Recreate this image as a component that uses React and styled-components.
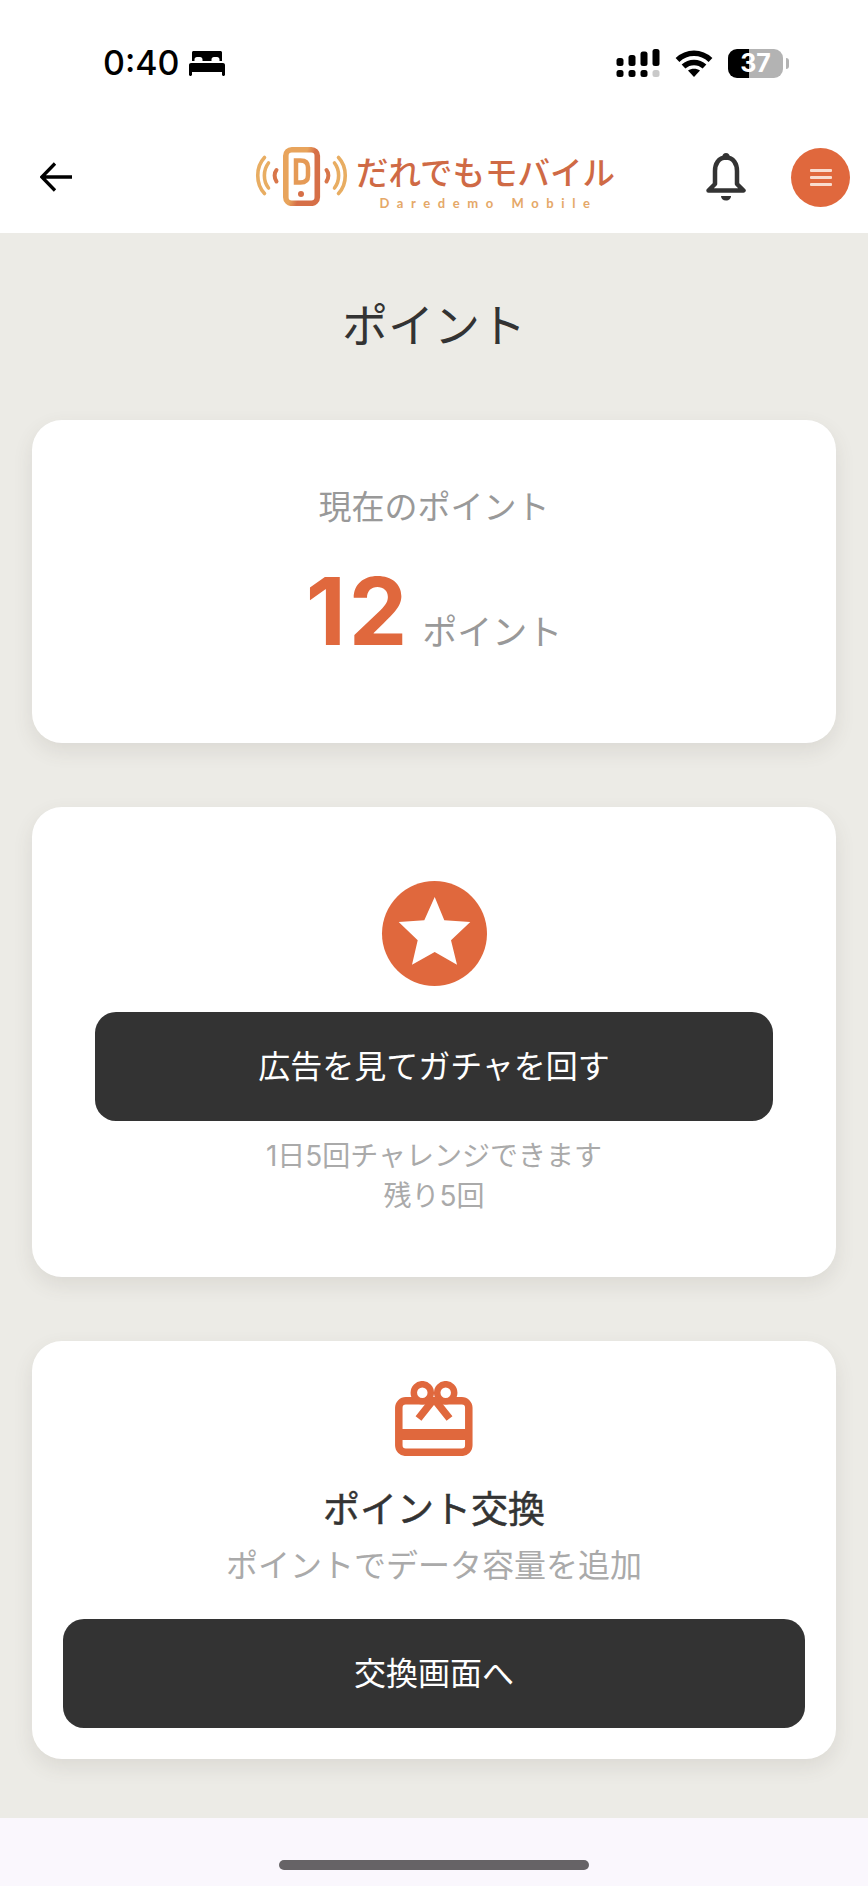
import React from "react";
import styled, { createGlobalStyle } from "styled-components";

const Global = createGlobalStyle`
  html, body { margin: 0; padding: 0; background: #ecebe6; }
  * { box-sizing: border-box; }
  body { font-family: "Inter", "Noto Sans CJK JP", sans-serif; }
`;

const Page = styled.div`
  width: 868px;
  height: 1886px;
  display: flex;
  flex-direction: column;
  overflow: hidden;
  background: #ecebe6;
`;
const Top = styled.header`
  background: #fff;
  height: 233px;
  display: flex;
  flex-direction: column;
`;
const StatusBar = styled.div`
  height: 120px;
  padding: 44px 78px 0 103px;
  display: flex;
  align-items: flex-start;
  justify-content: space-between;
`;
const TimeGroup = styled.div`
  display: flex;
  align-items: center;
  gap: 9px;
  height: 38px;
`;
const Time = styled.span`
  font-size: 34px;
  font-weight: 550;
  color: #000;
  line-height: 38px;
`;
const StatusIcons = styled.div`
  display: flex;
  align-items: center;
  gap: 15px;
  height: 38px;
`;
const Battery = styled.div`
  position: relative;
  width: 55px;
  height: 29px;
  border-radius: 9px;
  background: linear-gradient(90deg, #000 0 38%, #b3b3b3 38% 100%);
  color: #fff;
  font-size: 25px;
  font-weight: 700;
  line-height: 29px;
  text-align: center;
  margin-right: 7px;
  &::after {
    content: "";
    position: absolute;
    right: -6px;
    top: 9px;
    width: 3px;
    height: 11px;
    border-radius: 0 3px 3px 0;
    background: #b3b3b3;
  }
`;
const Nav = styled.nav`
  height: 113px;
  display: flex;
  align-items: center;
  padding: 0 18px 0 40px;
`;
const Logo = styled.div`
  margin-left: 183px;
  width: 358px;
  display: flex;
  align-items: center;
  gap: 10px;
`;
const LogoWords = styled.div`
  display: flex;
  flex-direction: column;
  align-items: center;
  width: 255px;
  padding-top: 6px;
`;
const LogoMain = styled.span`
  display: block;
  font-family: "Noto Sans CJK JP", sans-serif;
  font-size: 32.5px;
  font-weight: 500;
  line-height: 40px;
  height: 40px;
  color: #cf6a45;
  white-space: nowrap;
`;
const LogoSub = styled.span`
  display: block;
  margin: 6px 0 0 6px;
  font-family: "Lato", sans-serif;
  font-size: 13px;
  font-weight: 700;
  line-height: 12px;
  letter-spacing: 7.6px;
  color: #e5a868;
  white-space: nowrap;
`;
const Bell = styled.svg`
  width: 40px;
  height: 50px;
  margin-left: 93px;
  margin-top: 3px;
`;
const MenuButton = styled.div`
  width: 59px;
  height: 59px;
  margin-left: 45px;
  margin-top: 1px;
  border-radius: 50%;
  background: #e0683d;
  display: flex;
  flex-direction: column;
  align-items: center;
  justify-content: center;
  gap: 4px;
`;
const MenuBar = styled.span`
  width: 22px;
  height: 3px;
  background: #f9dccf;
  border-radius: 1px;
`;
const Main = styled.main`
  flex: 1;
  display: flex;
  flex-direction: column;
  padding: 0 32px;
`;
const Title = styled.h1`
  height: 187px;
  margin: 0;
  padding-bottom: 10px;
  display: flex;
  align-items: center;
  justify-content: center;
  font-size: 46px;
  font-weight: 400;
  color: #333;
`;
const Cards = styled.div`
  display: flex;
  flex-direction: column;
  gap: 64px;
`;
const Card = styled.section`
  background: #fff;
  border-radius: 30px;
  box-shadow: 0 8px 20px rgba(80, 70, 60, 0.11);
  padding: ${(p) => p.$pad};
  display: flex;
  flex-direction: column;
  align-items: center;
`;
const Label = styled.div`
  font-size: 33px;
  line-height: 48px;
  color: #999;
`;
const ValueRow = styled.div`
  display: flex;
  align-items: baseline;
  gap: 12px;
  margin-top: 24px;
`;
const Value = styled.span`
  font-size: 93px;
  font-weight: 700;
  line-height: 112px;
  letter-spacing: 3px;
  color: #e0683d;
`;
const Unit = styled.span`
  font-size: 35px;
  color: #999;
`;
const Circle = styled.div`
  width: 105px;
  height: 105px;
  border-radius: 50%;
  background: #e0683d;
  display: flex;
  align-items: center;
  justify-content: center;
`;
const DarkButton = styled.button`
  width: 100%;
  height: 109px;
  border: 0;
  border-radius: 21px;
  background: #333;
  color: #fff;
  font-family: inherit;
  font-size: ${(p) => p.$size}px;
  margin-top: ${(p) => p.$top}px;
  padding: 0 0 6px;
`;
const Note = styled.p`
  margin: 15px 0 0;
  font-size: 28px;
  line-height: 40px;
  color: #aaa;
  text-align: center;
`;
const ExchangeTitle = styled.h2`
  margin: 29px 0 0;
  font-size: 37px;
  font-weight: 400;
  -webkit-text-stroke: 0.5px #333;
  line-height: 50px;
  color: #333;
`;
const ExchangeSub = styled.p`
  margin: 6px 0 0;
  font-size: 32px;
  line-height: 50px;
  color: #aaa;
`;
const Footer = styled.footer`
  height: 68px;
  margin-top: auto;
  background: #faf7fd;
  display: flex;
  justify-content: center;
  padding-top: 42px;
`;
const HomeBar = styled.div`
  width: 310px;
  height: 10px;
  border-radius: 5px;
  background: #666366;
`;

export default function App() {
  return (
    <Page>
      <Global />
      <Top>
        <StatusBar>
          <TimeGroup>
            <Time>0:40</Time>
            <svg width="36" height="25" viewBox="0 0 36 25">
              <path fill="#000" d="M3 1.5C3 .7 3.7 0 4.5 0h27c.8 0 1.5.7 1.5 1.5V10h-2.5V8.5c0-1.5-1-2.500-2.500-2.500h-3c-1.500 0-2.500 1-2.500 2.500V10h-9V8.500C13.500 7 12.500 6 11 6H8C6.500 6 5.500 7 5.500 8.500V10H3z" />
              <path fill="#000" d="M2 12h32c1.100 0 2 .9 2 2v9.500c0 .8-.7 1.500-1.500 1.500S33 24.300 33 23.500V21H3v2.500C3 24.300 2.300 25 1.500 25S0 24.300 0 23.500V14c0-1.100.9-2 2-2z" />
            </svg>
          </TimeGroup>
          <StatusIcons>
            <svg width="44" height="30" viewBox="0 0 44 30">
              <rect x="0.500" y="10" width="7" height="8" rx="2.500" />
              <rect x="0.500" y="22" width="7" height="7" rx="2.500" />
              <rect x="12.500" y="7" width="7" height="11" rx="2.500" />
              <rect x="12.500" y="22" width="7" height="7" rx="2.500" />
              <rect x="24.500" y="3.500" width="7" height="14.500" rx="2.500" />
              <rect x="24.500" y="22" width="7" height="7" rx="2.500" />
              <rect x="36.500" y="1" width="7" height="17" rx="2.500" />
              <rect x="36.500" y="22" width="7" height="7" rx="2.500" fill="#c9c9c9" />
            </svg>
            <svg width="38" height="29" viewBox="0 0 38 29">
              <path d="M2.500 11C12 2 26 2 35.500 11M8.500 17.500c6-5.500 15-5.500 21 0" fill="none" stroke="#000" strokeWidth="5.500" strokeLinecap="butt" />
              <path d="M13 21.500c3.500-2.500 8.500-2.500 12 0L19 28z" fill="#000" />
            </svg>
            <Battery>37</Battery>
          </StatusIcons>
        </StatusBar>
        <Nav>
          <svg width="32" height="30" viewBox="0 0 32 30">
            <path d="M32 15H2M15 1.500 1.800 15 15 28.500" fill="none" stroke="#000" strokeWidth="3.300" />
          </svg>
          <Logo>
            <svg width="93" height="59" viewBox="0 0 93 59">
              <defs>
                <linearGradient id="phoneGrad" x1="0" y1="0" x2="1" y2="0.600">
                  <stop offset="0.500" stopColor="#e8a45c" />
                  <stop offset="0.700" stopColor="#d66f47" />
                </linearGradient>
              </defs>
              <rect x="30.800" y="2.800" width="31.500" height="53.500" rx="6" fill="none" stroke="url(#phoneGrad)" strokeWidth="5.600" />
              <path d="M41 13.500h4.500c6 0 7.500 3 7.500 7v8c0 4-1.500 7-7.500 7H41z" fill="none" stroke="#e59a56" strokeWidth="4.500" />
              <circle cx="46" cy="47" r="3" fill="#d66f47" />
              <g fill="none" stroke="#e8ad62" strokeWidth="3.600" strokeLinecap="round">
                <path d="M9.500 10.500C.5 20 .5 37 9.500 46.500" />
                <path d="M13.500 16C8 23 8 34 13.500 41" />
                <path d="M83.500 10.500c9 9.500 9 26.500 0 36" />
                <path d="M79.500 16c5.500 7 5.500 18 0 25" />
              </g>
              <g fill="none" stroke="#d8764a" strokeWidth="4" strokeLinecap="round">
                <path d="M21.500 23c-2.500 3-2.500 8 0 11.500" />
                <path d="M71.500 23c2.500 3 2.500 8 0 11.500" />
              </g>
            </svg>
            <LogoWords>
              <LogoMain>だれでもモバイル</LogoMain>
              <LogoSub>Daredemo Mobile</LogoSub>
            </LogoWords>
          </Logo>
          <Bell viewBox="0 0 40 50">
            <circle cx="20" cy="3.500" r="3.500" fill="#333" />
            <path d="M20 4.500C27.500 4.500 31 11 31 18V31L37.500 37.500H2.500L9 31V18C9 11 12.500 4.500 20 4.500z" fill="none" stroke="#333" strokeWidth="4.500" strokeLinejoin="round" />
            <path d="M15 43h10c0 2.500-2 4.500-5 4.500s-5-2-5-4.500z" fill="#333" />
          </Bell>
          <MenuButton>
            <MenuBar />
            <MenuBar />
            <MenuBar />
          </MenuButton>
        </Nav>
      </Top>
      <Main>
        <Title>ポイント</Title>
        <Cards>
          <Card $pad="63px 0 76px">
            <Label>現在のポイント</Label>
            <ValueRow>
              <Value>12</Value>
              <Unit>ポイント</Unit>
            </ValueRow>
          </Card>
          <Card $pad="74px 63px 61px">
            <Circle>
              <svg width="105" height="105" viewBox="0 0 105 105">
                <polygon fill="#fff" points="52.700,16 62.300,39.300 88.300,41 69,59.300 75,83.700 52.700,71 30,83.700 35.700,59.300 16.700,41 42.300,39.300" />
              </svg>
            </Circle>
            <DarkButton $size={32} $top={26}>広告を見てガチャを回す</DarkButton>
            <Note>
              1日5回チャレンジできます
              <br />
              残り5回
            </Note>
          </Card>
          <Card $pad="40px 31px 31px">
            <svg width="78" height="75" viewBox="0 0 78 75">
              <rect x="3.800" y="19.800" width="70" height="51.500" rx="7" fill="none" stroke="#e0683d" strokeWidth="7.500" />
              <rect x="4" y="48" width="70" height="11" fill="#e0683d" />
              <circle cx="27.300" cy="11.700" r="8.500" fill="#fff" stroke="#e0683d" strokeWidth="6.500" />
              <circle cx="50.700" cy="11.700" r="8.500" fill="#fff" stroke="#e0683d" strokeWidth="6.500" />
              <path d="M39 18 23.500 37.500M39 18 54.500 37.500" fill="none" stroke="#e0683d" strokeWidth="7.500" />
            </svg>
            <ExchangeTitle>ポイント交換</ExchangeTitle>
            <ExchangeSub>ポイントでデータ容量を追加</ExchangeSub>
            <DarkButton $size={32} $top={28}>交換画面へ</DarkButton>
          </Card>
        </Cards>
      </Main>
      <Footer>
        <HomeBar />
      </Footer>
    </Page>
  );
}
